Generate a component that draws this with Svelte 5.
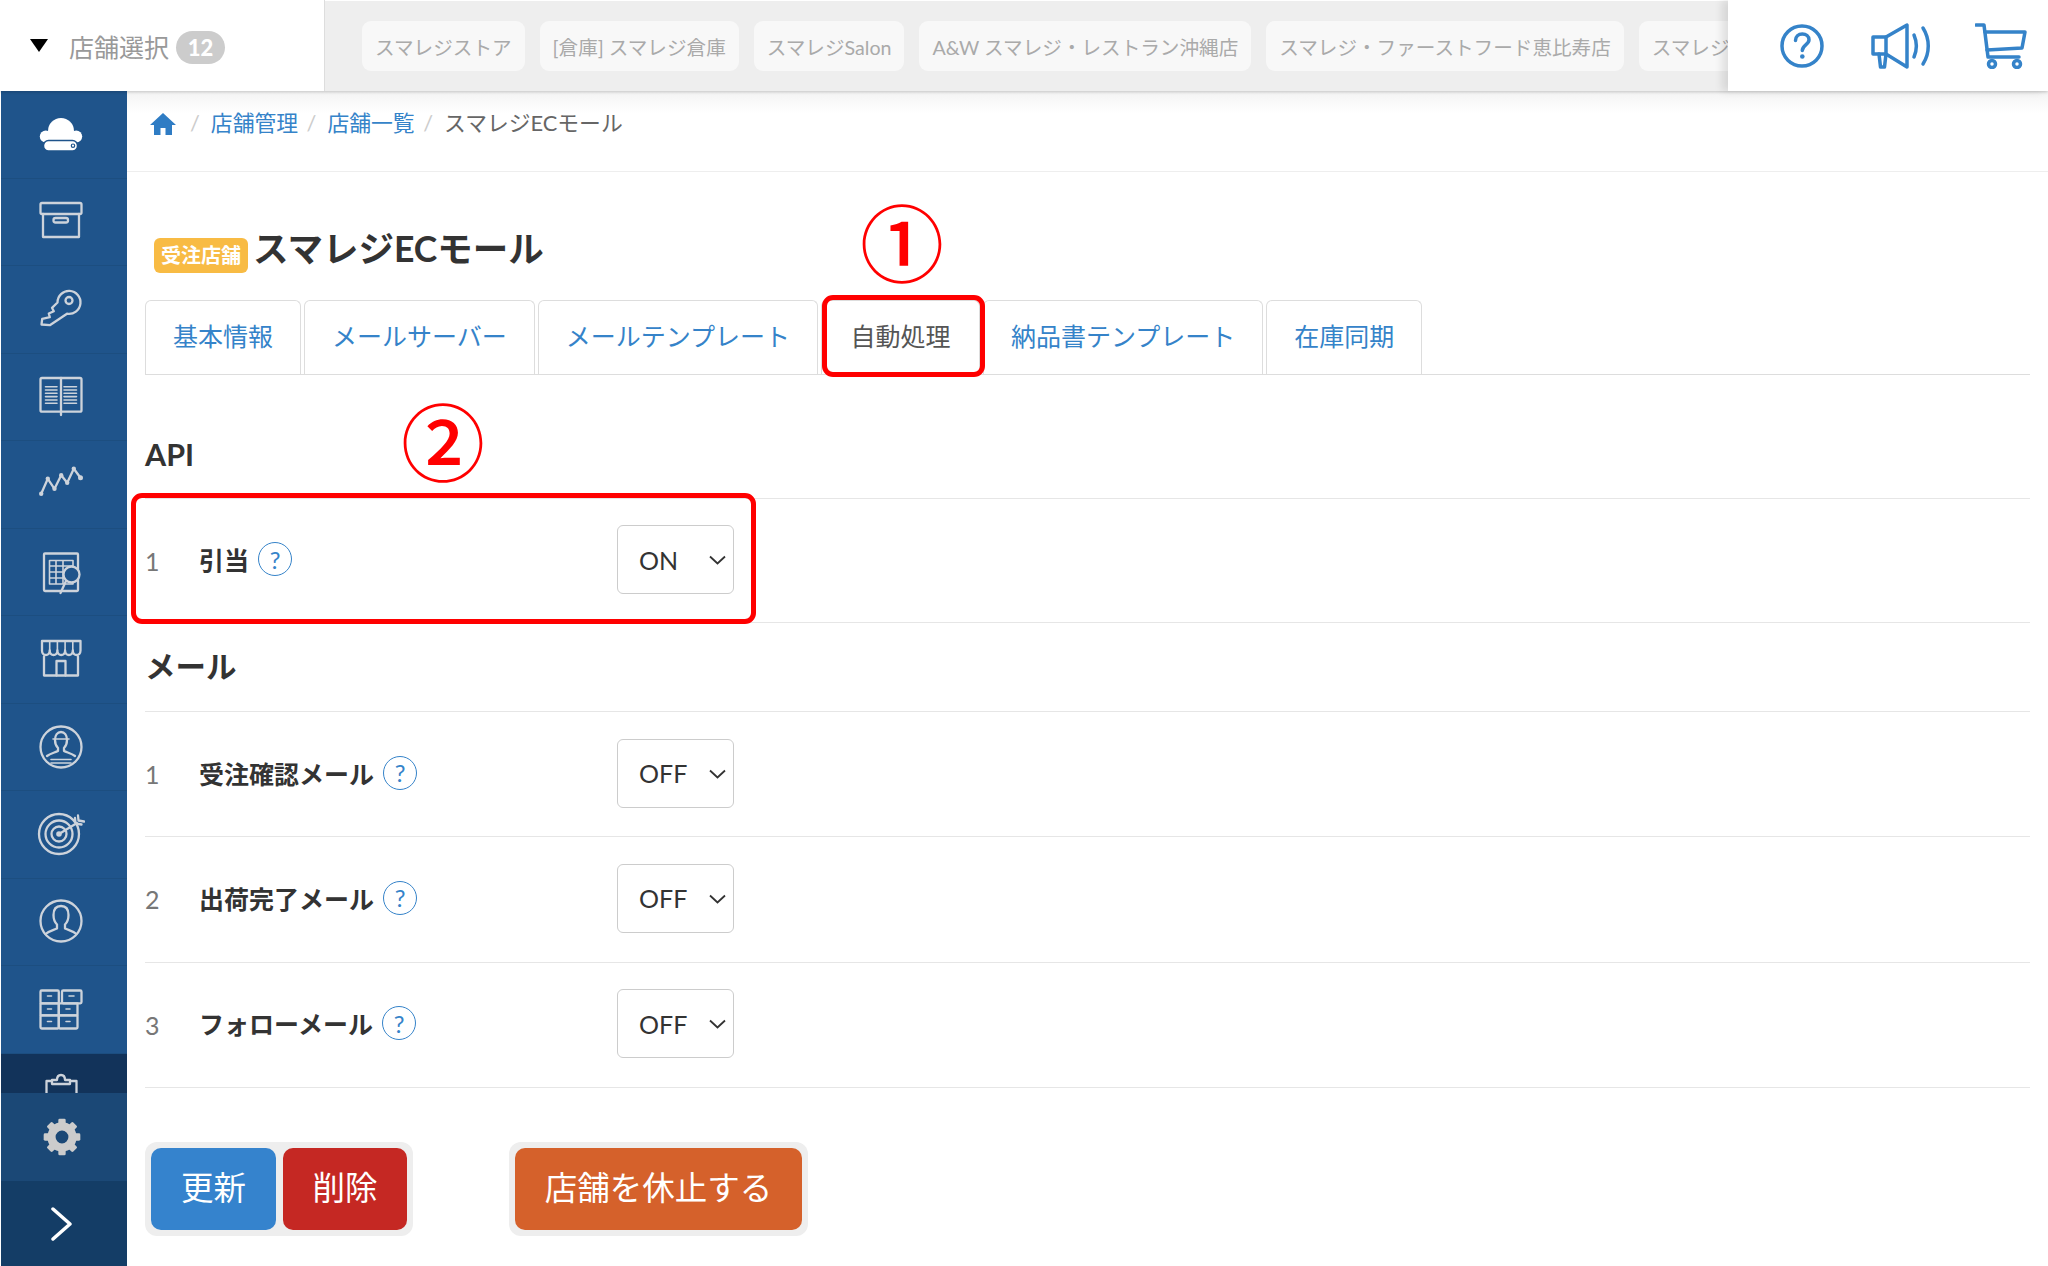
<script>
  const stores = ['スマレジストア', '[倉庫] スマレジ倉庫', 'スマレジSalon', 'A&W スマレジ・レストラン沖縄店', 'スマレジ・ファーストフード恵比寿店', 'スマレジ・リテール渋谷店'];
  const tabs = ['基本情報', 'メールサーバー', 'メールテンプレート', '自動処理', '納品書テンプレート', '在庫同期'];
  const apiRows = [{ no: 1, label: '引当', value: 'ON' }];
  const mailRows = [
    { no: 1, label: '受注確認メール', value: 'OFF' },
    { no: 2, label: '出荷完了メール', value: 'OFF' },
    { no: 3, label: 'フォローメール', value: 'OFF' }
  ];
  const gearTeeth = [0, 45, 90, 135, 180, 225, 270, 315];
</script>

{#snippet settingRow(row)}
  <div class="row">
    <span class="no">{row.no}</span>
    <span class="label">{row.label}<span class="hint">?</span></span>
    <div class="select">
      <select>
        <option>{row.value}</option>
      </select>
      <svg class="caret" viewBox="0 0 17 10" width="17" height="10"><path d="M1 1.500 8.500 8.500 16 1.500" /></svg>
    </div>
  </div>
{/snippet}

<div class="page">
  <header class="topbar">
    <div class="store-select">
      <span class="arrow"></span>
      <span class="store-title">店舗選択</span>
      <span class="count">12</span>
    </div>
    <div class="store-strip">
      {#each stores as store}
        <span class="chip">{store}</span>
      {/each}
    </div>
    <div class="top-icons">
      <svg width="44" height="46" viewBox="0 0 44 46">
        <circle cx="22" cy="23" r="20" />
        <path d="M15.500 17.500c0-4 3-6.500 6.800-6.500s6.700 2.400 6.700 5.800c0 5-6.700 5.200-6.700 10.700" />
        <circle class="solid" cx="22.300" cy="33.500" r="2.300" />
      </svg>
      <svg class="mega" width="60" height="46" viewBox="0 0 60 46">
        <path d="M2 14h13L36 2v42L15 31H2z" />
        <path d="M8 31l1.500 13h4L15 31M15 14v17" />
        <path d="M43 12c3 7 3 15 0 22M52 5c7 11 7 25 0 36" />
      </svg>
      <svg width="52" height="46" viewBox="0 0 52 46">
        <path d="M1 2h8l4 32h31" />
        <path d="M10 9h40l-3 16-35 2" />
        <circle cx="17" cy="41" r="3.500" />
        <circle cx="42" cy="41" r="3.500" />
      </svg>
    </div>
  </header>

  <div class="body">
    <aside class="sidebar">
      <nav class="nav">
        <div class="nav-item">
          <svg viewBox="0 0 48 48" width="48" height="48">
            <g class="white">
              <circle cx="24" cy="21" r="13" />
              <circle cx="8.800" cy="26.500" r="6" />
              <circle cx="39.200" cy="26.500" r="6" />
              <rect x="8" y="22" width="32" height="10" />
            </g>
            <rect class="pill" x="6.500" y="30.500" width="34" height="10.500" rx="5" />
            <circle class="dot" cx="36" cy="35.700" r="1.700" />
          </svg>
        </div>
        <div class="nav-item">
          <svg viewBox="0 2 48 48" width="48" height="48">
            <rect x="3.500" y="7" width="41" height="11" rx="1.500" />
            <path d="M6 18v23h36V18" />
            <rect x="16.500" y="22" width="14.500" height="4.500" rx="2" />
          </svg>
        </div>
        <div class="nav-item">
          <svg viewBox="0 1.500 48 48" width="48" height="48">
            <path d="M20.500 19 15 24.300l1.800 3.400-5 2.300 1 3.700-7.600 1.600-.7 5.700 8.300.7L30 30.200A11.500 11.500 0 1 0 20.500 19z" />
            <circle cx="32" cy="17" r="3.500" />
          </svg>
        </div>
        <div class="nav-item">
          <svg viewBox="0 2 48 48" width="48" height="48">
            <rect x="3.500" y="7" width="41" height="33.700" rx="1.500" />
            <path d="M24 7v37" />
            <path class="thin" d="M8.500 15.700H20M8.500 19H20M8.500 22.300H20M8.500 25.600H20M8.500 29H20M8.500 32.300H20M27 15.700h12.500M27 19h12.500M27 22.300h12.500M27 25.600h12.500M27 29h12.500M27 32.300h12.500" />
          </svg>
        </div>
        <div class="nav-item">
          <svg viewBox="0 2.500 48 48" width="48" height="48">
            <path d="M4.200 36.300 10.800 21.300 17.500 31.300 24.200 17.700 30.200 25.300 36.800 11.300 43.500 20.300" />
            <g class="fill-light">
              <circle cx="4.200" cy="36.300" r="2.200" /><circle cx="10.800" cy="21.300" r="2.200" /><circle cx="17.500" cy="31.300" r="2.200" />
              <circle cx="24.200" cy="17.700" r="2.200" /><circle cx="30.200" cy="25.300" r="2.200" /><circle cx="36.800" cy="11.300" r="2.200" />
              <circle cx="43.500" cy="20.300" r="2.500" />
            </g>
          </svg>
        </div>
        <div class="nav-item">
          <svg viewBox="0 0 48 48" width="48" height="48">
            <rect x="7" y="5.500" width="34" height="37.500" rx="1" />
            <path class="thin" d="M12.500 12.500H36M12.500 18H36M12.500 24H36M12.500 30H36M12.500 36H36M12.500 12.500V36M19 12.500V36M26 12.500V36M36 12.500V36" />
            <circle class="bg-fill" cx="34.500" cy="26.500" r="8" />
            <path d="M29 33 23.500 45" />
          </svg>
        </div>
        <div class="nav-item">
          <svg viewBox="0 1.500 48 48" width="48" height="48">
            <path d="M7 23v19h34V23" />
            <path d="M5 7.500h38.500V17c0 6-7.700 6-7.700 0 0 6-7.700 6-7.700 0 0 6-7.700 6-7.700 0 0 6-7.700 6-7.700 0 0 6-7.700 6-7.700 0z" />
            <path class="thin" d="M12.700 7.500V17M20.400 7.500V17M28.100 7.500V17M35.800 7.500V17" />
            <path d="M19.500 42V27.500h9V42" />
          </svg>
        </div>
        <div class="nav-item">
          <svg viewBox="0 0 48 48" width="48" height="48">
            <circle cx="24" cy="24" r="20.500" />
            <path d="M18 17c0-5 2.500-8 6-8s6 3 6 8c0 4-2 7-3 8v3c3 1.500 8 2.500 11 5M18 17c0 4 2 7 3 8v3c-3 1.500-8 2.500-11 5" />
            <path class="thin" d="M16 16h16M14 36.500h20M14 40h20" />
          </svg>
        </div>
        <div class="nav-item">
          <svg viewBox="0 0 48 48" width="48" height="48">
            <circle cx="22" cy="24" r="20" />
            <circle cx="22" cy="24" r="13.500" />
            <circle cx="22" cy="24" r="7.500" />
            <circle class="fill-light" cx="22" cy="24" r="2.800" />
            <path d="M22 24 40 13M38 8l.5 5.500 6 1M41 5.500l.5 5 5.500 1" />
          </svg>
        </div>
        <div class="nav-item">
          <svg viewBox="0 1 48 48" width="48" height="48">
            <circle cx="24" cy="24" r="20.500" />
            <path d="M8.500 37c3.500-3 8.500-4 11.500-5.500v-4c-1.500-1.500-3.500-5-3.500-9.500 0-6 3-9 7.500-9s7.500 3 7.500 9c0 4.500-2 8-3.500 9.500v4c3 1.500 8 2.500 11.500 5.500" />
          </svg>
        </div>
        <div class="nav-item">
          <svg viewBox="0 0 48 48" width="48" height="48">
            <rect x="3.500" y="5.500" width="18.300" height="12.800" rx="1.200" />
            <rect x="25" y="5.500" width="19.500" height="12.800" rx="1.200" />
            <rect x="3.500" y="18.300" width="18.300" height="12" />
            <rect x="21.800" y="18.300" width="18.700" height="12" />
            <rect x="3.500" y="30.300" width="18.300" height="13.200" rx="1.200" />
            <rect x="21.800" y="30.300" width="18.700" height="13.200" rx="1.200" />
            <path class="thin" d="M10.500 11h4M32 11h5M10.500 24h4M29 24h4M10.500 36.500h4M29 36.500h4" />
          </svg>
        </div>
        <div class="nav-item current">
          <svg viewBox="0 0 48 48" width="48" height="48">
            <path d="M15 8H9.500v30h30V8H33" />
            <path d="M15 11V7h5c0-3 1.500-5 4-5s4 2 4 5h5v4z" />
          </svg>
        </div>
      </nav>
      <div class="settings">
        <svg viewBox="0 0 48 48" width="44" height="44">
          <circle class="ring" cx="24" cy="24" r="11.500" />
          {#each gearTeeth as a}
            <rect class="tooth" x="20" y="4" width="8" height="9" rx="1.500" transform="rotate({a} 24 24)" />
          {/each}
        </svg>
      </div>
      <div class="collapse">
        <svg viewBox="0 0 22 34" width="22" height="34"><path d="M2 2l17 15L2 32" /></svg>
      </div>
    </aside>

    <main class="main">
      <div class="breadcrumb">
        <svg class="home" viewBox="0 0 26 24" width="26" height="24"><path d="M13 1 0 13h4v10h6.500v-7h5v7H22V13h4z" /></svg>
        <span class="sep">/</span>
        <a href="#top">店舗管理</a>
        <span class="sep">/</span>
        <a href="#top">店舗一覧</a>
        <span class="sep">/</span>
        <span class="crumb-now">スマレジECモール</span>
      </div>

      <div class="content">
        <h1 class="title"><span class="tag">受注店舗</span>スマレジECモール</h1>

        <div class="tabs">
          {#each tabs as tab}
            <span class="tab" class:active={tab === '自動処理'}>{tab}</span>
          {/each}
        </div>

        <h2 class="section-title">API</h2>
        <section class="section api">
          {#each apiRows as row}
            {@render settingRow(row)}
          {/each}
        </section>

        <h2 class="section-title second">メール</h2>
        <section class="section">
          {#each mailRows as row}
            {@render settingRow(row)}
          {/each}
        </section>

        <div class="actions">
          <div class="btn-group">
            <button class="btn blue">更新</button>
            <button class="btn red">削除</button>
          </div>
          <div class="btn-group">
            <button class="btn orange">店舗を休止する</button>
          </div>
        </div>
      </div>
    </main>
  </div>

  <!-- 画像の上に重ねた注釈 -->
  <div class="mark mark-tab"></div>
  <div class="mark mark-row"></div>
  <span class="num num-1">①</span>
  <span class="num num-2">②</span>
</div>

<style>
  :global(body) {
    margin: 0;
    background: #fff;
  }

  .page {
    position: relative;
    width: 2048px;
    height: 1266px;
    overflow: hidden;
    font-family: Lato, "Noto Sans CJK JP", sans-serif;
    color: #333;
    display: flex;
    flex-direction: column;
  }

  .topbar {
    height: 91px;
    flex: none;
    display: flex;
    position: relative;
    z-index: 2;
    box-shadow: 0 1px 3px rgba(0, 0, 0, 0.2);
    background: #fff;
  }

  .store-select {
    width: 325px;
    flex: none;
    box-sizing: border-box;
    border-right: 1px solid #ddd;
    display: flex;
    align-items: center;
    padding-left: 30px;
  }

  .arrow {
    width: 0;
    height: 0;
    border-left: 9.500px solid transparent;
    border-right: 9.500px solid transparent;
    border-top: 13px solid #000;
    margin-right: 21px;
    margin-top: -1px;
  }

  .store-title {
    font-size: 25px;
    color: #999;
  }

  .count {
    margin-left: 7px;
    width: 49px;
    height: 33px;
    border-radius: 17px;
    background: #ccc;
    color: #fff;
    font-size: 22px;
    font-weight: 900;
    display: flex;
    align-items: center;
    justify-content: center;
    margin-top: 4px;
  }

  .store-strip {
    flex: 1;
    min-width: 0;
    overflow: hidden;
    background: #eee;
    display: flex;
    align-items: center;
    gap: 15px;
    padding-left: 37px;
    margin-top: 1px;
  }

  .chip {
    flex: none;
    height: 50px;
    box-sizing: border-box;
    padding: 0 13px;
    background: #f8f8f8;
    border-radius: 9px;
    color: #aaa;
    font-size: 19.600px;
    display: flex;
    align-items: center;
    white-space: nowrap;
  }

  .top-icons {
    width: 320px;
    flex: none;
    box-sizing: border-box;
    padding-left: 52px;
    display: flex;
    align-items: center;
    gap: 44px;
    background: #fff;
    box-shadow: -6px 0 8px rgba(0, 0, 0, 0.1);
  }

  .top-icons svg {
    fill: none;
    stroke: #3583c9;
    stroke-width: 3.500;
    stroke-linejoin: round;
    stroke-linecap: round;
  }

  .top-icons .mega {
    margin-left: 3px;
  }

  .top-icons .solid {
    fill: #3583c9;
    stroke: none;
  }

  .body {
    flex: 1;
    min-height: 0;
    display: flex;
  }

  .sidebar {
    width: 126px;
    margin-left: 1px;
    flex: none;
    display: flex;
    flex-direction: column;
    background: #1f548b;
    overflow: hidden;
  }

  .nav {
    flex: 1;
    min-height: 0;
    overflow: hidden;
  }

  .nav-item {
    height: 87.500px;
    box-sizing: border-box;
    border-bottom: 1px solid #1c4e80;
    padding-right: 7px;
    display: flex;
    align-items: center;
    justify-content: center;
  }

  .nav-item.current {
    background: #12335a;
    border-bottom: none;
  }

  .nav-item svg {
    fill: none;
    stroke: #cdd3db;
    stroke-width: 2.300;
    stroke-linejoin: round;
    stroke-linecap: round;
  }

  .nav-item .thin {
    stroke-width: 1.600;
  }

  .nav-item .white {
    fill: #fff;
    stroke: none;
  }

  .nav-item .pill {
    fill: #fff;
    stroke: #1f548b;
    stroke-width: 1.500;
  }

  .nav-item .dot {
    fill: #fff;
    stroke: #1f548b;
    stroke-width: 1.200;
  }

  .nav-item .fill-light {
    fill: #cdd3db;
    stroke: none;
  }

  .nav-item .bg-fill {
    fill: #1f548b;
  }

  .settings {
    height: 88px;
    flex: none;
    background: #1b4876;
    display: flex;
    align-items: center;
    justify-content: center;
    padding-right: 4px;
  }

  .settings .ring {
    fill: none;
    stroke: #ccc;
    stroke-width: 9;
  }

  .settings .tooth {
    fill: #ccc;
  }

  .collapse {
    height: 85px;
    flex: none;
    background: #143d66;
    display: flex;
    align-items: center;
    justify-content: center;
    padding-right: 5px;
  }

  .collapse svg {
    fill: none;
    stroke: #fff;
    stroke-width: 3.500;
    stroke-linecap: round;
    stroke-linejoin: round;
  }

  .main {
    flex: 1;
    min-width: 0;
    background: #fff;
  }

  .breadcrumb {
    height: 81px;
    box-sizing: border-box;
    border-bottom: 1px solid #eee;
    background: linear-gradient(#f3f3f3, #fff 22px);
    padding: 21px 0 0 23px;
    display: flex;
    align-items: flex-start;
    font-size: 21.800px;
    line-height: 22px;
  }

  .home {
    fill: #2f7cc4;
    margin-right: 14px;
  }

  .sep {
    color: #ccc;
    margin-right: 11px;
  }

  .breadcrumb a {
    color: #3583c9;
    text-decoration: none;
    margin-right: 8.500px;
  }

  .crumb-now {
    color: #666;
  }

  .content {
    padding: 0 18px;
  }

  .title {
    margin: 0;
    padding: 54px 0 0 9px;
    height: 128px;
    box-sizing: border-box;
    font-size: 35.500px;
    line-height: 46px;
    font-weight: 700;
    display: flex;
    align-items: flex-start;
  }

  .tag {
    width: 94px;
    height: 35px;
    margin: 12px 5px 0 0;
    background: #f8bb44;
    border-radius: 6px;
    color: #fff;
    font-size: 20px;
    line-height: 35px;
    text-align: center;
  }

  .tabs {
    display: flex;
    gap: 3px;
    border-bottom: 1px solid #ddd;
    height: 74px;
    box-sizing: content-box;
  }

  .tab {
    padding: 0 27px 5px;
    height: 74px;
    box-sizing: border-box;
    border: 1px solid #ddd;
    border-bottom: none;
    border-radius: 6px 6px 0 0;
    color: #3583c9;
    font-size: 25px;
    display: flex;
    align-items: center;
  }

  .tab.active {
    color: #555;
    padding: 0 28.500px 5px;
  }

  .section-title {
    margin: 0;
    height: 124px;
    box-sizing: border-box;
    padding-top: 56px;
    font-size: 30.500px;
    line-height: 46px;
    font-weight: 700;
    border-bottom: 1px solid #e6e6e6;
  }

  .section-title.second {
    height: 89px;
    padding-top: 20px;
  }

  .row {
    height: 125.300px;
    box-sizing: border-box;
    border-bottom: 1px solid #e6e6e6;
    display: grid;
    grid-template-columns: 54px 418px auto;
    align-items: center;
    justify-content: start;
  }

  .api .row {
    height: 124px;
  }

  .no {
    color: #777;
    font-size: 25px;
  }

  .label {
    display: flex;
    align-items: center;
    font-size: 25px;
    font-weight: 700;
    color: #333;
    margin-bottom: 3px;
  }

  .hint {
    margin-left: 9px;
    width: 34px;
    height: 34px;
    box-sizing: border-box;
    border: 1px solid #3583c9;
    border-radius: 50%;
    color: #3583c9;
    font-size: 24px;
    font-weight: 400;
    display: flex;
    align-items: center;
    justify-content: center;
  }

  .select {
    position: relative;
    width: 117px;
    height: 69px;
    margin-bottom: 2px;
  }

  .select select {
    appearance: none;
    width: 100%;
    height: 100%;
    box-sizing: border-box;
    border: 1px solid #ccc;
    border-radius: 6px;
    background: #fff;
    padding: 0 0 0 21px;
    font: 400 25px Lato, "Noto Sans CJK JP", sans-serif;
    color: #333;
  }

  .caret {
    position: absolute;
    right: 8px;
    top: 30px;
    fill: none;
    stroke: #333;
    stroke-width: 1.800;
  }

  .actions {
    display: flex;
    gap: 96px;
    margin-top: 54px;
  }

  .btn-group {
    display: flex;
    gap: 7px;
    padding: 6px;
    background: #eee;
    border-radius: 12px;
  }

  .btn {
    height: 82px;
    border: none;
    border-radius: 10px;
    color: #fff;
    font: 400 32.500px Lato, "Noto Sans CJK JP", sans-serif;
    padding: 0 0 6px;
  }

  .blue {
    width: 125px;
    background: #3583cd;
  }

  .red {
    width: 124px;
    background: #c52823;
  }

  .orange {
    width: 287px;
    background: #d5612b;
  }

  .mark {
    position: absolute;
    box-sizing: border-box;
    border: 5px solid #f00;
    border-radius: 11px;
    z-index: 3;
  }

  .mark-tab {
    left: 822px;
    top: 295px;
    width: 163px;
    height: 82px;
  }

  .mark-row {
    left: 131px;
    top: 493px;
    width: 625px;
    height: 131px;
  }

  .num {
    position: absolute;
    z-index: 3;
    color: #f00;
    font-family: "Noto Sans CJK JP", sans-serif;
    font-size: 84px;
    font-weight: 500;
    line-height: 84px;
    width: 84px;
    text-align: center;
  }

  .num-1 {
    left: 860px;
    top: 198px;
  }

  .num-2 {
    left: 401px;
    top: 397px;
  }
</style>
